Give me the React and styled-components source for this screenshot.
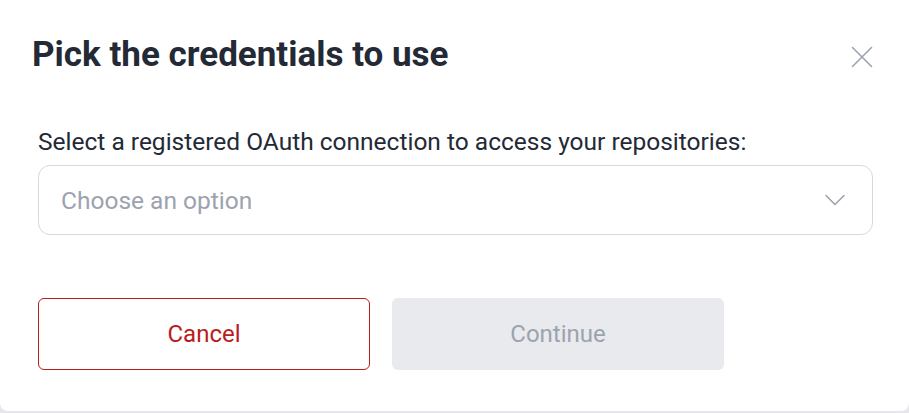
import React from "react";
import styled, { createGlobalStyle } from "styled-components";

const GlobalStyle = createGlobalStyle`
  html, body {
    margin: 0;
    padding: 0;
    background: #e5e7eb;
    font-family: Roboto, "Noto Sans", sans-serif;
  }
`;

const Modal = styled.div`
  width: 909px;
  height: 411px;
  box-sizing: border-box;
  background: #ffffff;
  border-radius: 0 0 8px 8px;
  padding: 32px 36px 0 38px;
  display: flex;
  flex-direction: column;
`;

const Header = styled.div`
  display: flex;
  align-items: center;
  justify-content: space-between;
  margin-left: -6px;
  height: 46px;
`;

const Title = styled.h2`
  margin: 0;
  font-size: 35px;
  line-height: 46px;
  font-weight: 700;
  color: #232a36;
`;

const CloseButton = styled.button`
  border: none;
  background: none;
  padding: 0;
  width: 22px;
  height: 22px;
  display: flex;
  align-items: center;
  justify-content: center;
  cursor: pointer;
  margin-top: 4px;
`;

const Label = styled.label`
  margin-top: 50px;
  font-size: 24.5px;
  line-height: 28px;
  color: #232a36;
`;

const Select = styled.div`
  margin-top: 9px;
  height: 70px;
  box-sizing: border-box;
  border: 1px solid #d5d8de;
  border-radius: 12px;
  padding: 0 26px 0 22px;
  display: flex;
  align-items: center;
  justify-content: space-between;
  font-size: 24.5px;
  color: #9ca3af;
`;

const Actions = styled.div`
  margin-top: 63px;
  display: flex;
  gap: 22px;
`;

const ActionButton = styled.button`
  width: 332px;
  height: 72px;
  box-sizing: border-box;
  border-radius: 6px;
  font-family: Roboto, "Noto Sans", sans-serif;
  font-size: 24px;
  border: 1px solid ${(p) => (p.$outline ? "#b91c1c" : "transparent")};
  background: ${(p) => (p.$outline ? "#ffffff" : "#e9eaee")};
  color: ${(p) => (p.$outline ? "#b91c1c" : "#9ca3af")};
  cursor: ${(p) => (p.disabled ? "default" : "pointer")};
`;

const App = () => (
  <>
    <GlobalStyle />
    <Modal>
      <Header>
        <Title>Pick the credentials to use</Title>
        <CloseButton aria-label="Close">
          <svg width="22" height="22" viewBox="0 0 22 22" fill="none">
            <path
              d="M1.5 1.5L20.5 20.5M20.5 1.5L1.5 20.5"
              stroke="#9ca3af"
              strokeWidth="1.6"
              strokeLinecap="round"
            />
          </svg>
        </CloseButton>
      </Header>
      <Label>Select a registered OAuth connection to access your repositories:</Label>
      <Select>
        <span>Choose an option</span>
        <svg width="22" height="13" viewBox="0 0 22 13" fill="none">
          <path
            d="M2 1.5L11 10.5L20 1.5"
            stroke="#9ca3af"
            strokeWidth="1.6"
            strokeLinecap="round"
            strokeLinejoin="round"
          />
        </svg>
      </Select>
      <Actions>
        <ActionButton $outline>Cancel</ActionButton>
        <ActionButton disabled>Continue</ActionButton>
      </Actions>
    </Modal>
  </>
);

export default App;
